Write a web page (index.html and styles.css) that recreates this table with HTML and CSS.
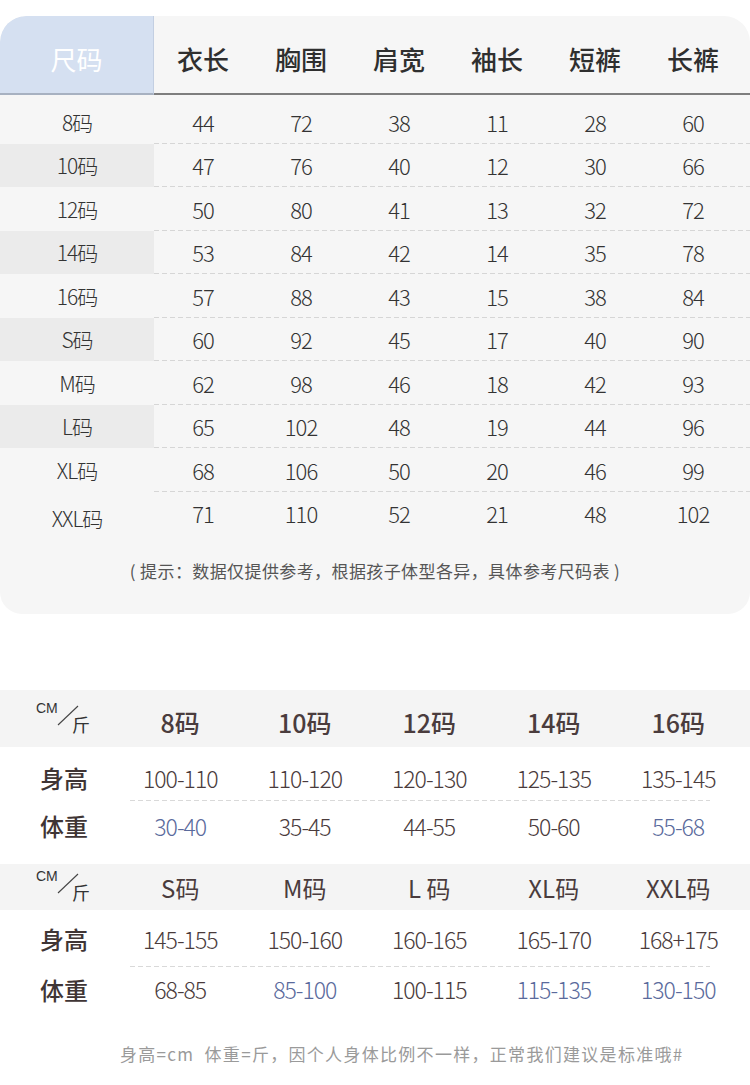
FILE: index.html
```html
<!DOCTYPE html>
<html lang="zh-CN">
<head>
<meta charset="utf-8">
<title>尺码表</title>
<link rel="stylesheet" href="styles.css">
</head>
<body>
<section class="card">
  <div class="thead">
    <div class="th-size">尺码</div>
    <div class="th-cols">
      <div class="th">衣长</div>
      <div class="th">胸围</div>
      <div class="th">肩宽</div>
      <div class="th">袖长</div>
      <div class="th">短裤</div>
      <div class="th">长裤</div>
    </div>
  </div>
  <div class="tbody">
    <div class="row"><div class="label">8码</div><div class="cells"><span>44</span><span>72</span><span>38</span><span>11</span><span>28</span><span>60</span></div></div>
    <div class="row alt"><div class="label">10码</div><div class="cells"><span>47</span><span>76</span><span>40</span><span>12</span><span>30</span><span>66</span></div></div>
    <div class="row"><div class="label">12码</div><div class="cells"><span>50</span><span>80</span><span>41</span><span>13</span><span>32</span><span>72</span></div></div>
    <div class="row alt"><div class="label">14码</div><div class="cells"><span>53</span><span>84</span><span>42</span><span>14</span><span>35</span><span>78</span></div></div>
    <div class="row"><div class="label">16码</div><div class="cells"><span>57</span><span>88</span><span>43</span><span>15</span><span>38</span><span>84</span></div></div>
    <div class="row alt"><div class="label">S码</div><div class="cells"><span>60</span><span>92</span><span>45</span><span>17</span><span>40</span><span>90</span></div></div>
    <div class="row"><div class="label">M码</div><div class="cells"><span>62</span><span>98</span><span>46</span><span>18</span><span>42</span><span>93</span></div></div>
    <div class="row alt"><div class="label">L码</div><div class="cells"><span>65</span><span>102</span><span>48</span><span>19</span><span>44</span><span>96</span></div></div>
    <div class="row"><div class="label">XL码</div><div class="cells"><span>68</span><span>106</span><span>50</span><span>20</span><span>46</span><span>99</span></div></div>
    <div class="row last"><div class="label label-low">XXL码</div><div class="cells"><span>71</span><span>110</span><span>52</span><span>21</span><span>48</span><span>102</span></div></div>
  </div>
  <p class="hint">( 提示：数据仅提供参考，根据孩子体型各异，具体参考尺码表 )</p>
</section>

<section class="hw hw-a">
  <div class="hw-head">
    <div class="unit"><span class="unit-cm">CM</span><svg class="unit-slash" width="24" height="22" viewBox="0 0 24 22"><line x1="22" y1="1" x2="2" y2="20" stroke="#444" stroke-width="1.1"/></svg><span class="unit-jin">斤</span></div>
    <div class="hc">8码</div><div class="hc">10码</div><div class="hc">12码</div><div class="hc">14码</div><div class="hc">16码</div>
  </div>
  <div class="hw-row hw-r1">
    <div class="hl">身高</div>
    <div class="hv">100-110</div><div class="hv">110-120</div><div class="hv">120-130</div><div class="hv">125-135</div><div class="hv">135-145</div>
  </div>
  <div class="hw-row hw-r2">
    <div class="hl">体重</div>
    <div class="hv blue">30-40</div><div class="hv">35-45</div><div class="hv">44-55</div><div class="hv">50-60</div><div class="hv blue">55-68</div>
  </div>
</section>

<section class="hw hw-b">
  <div class="hw-head">
    <div class="unit"><span class="unit-cm">CM</span><svg class="unit-slash" width="24" height="22" viewBox="0 0 24 22"><line x1="22" y1="1" x2="2" y2="20" stroke="#444" stroke-width="1.1"/></svg><span class="unit-jin">斤</span></div>
    <div class="hc">S码</div><div class="hc">M码</div><div class="hc">L 码</div><div class="hc">XL码</div><div class="hc">XXL码</div>
  </div>
  <div class="hw-row hw-r1">
    <div class="hl">身高</div>
    <div class="hv">145-155</div><div class="hv">150-160</div><div class="hv">160-165</div><div class="hv">165-170</div><div class="hv">168+175</div>
  </div>
  <div class="hw-row hw-r2">
    <div class="hl">体重</div>
    <div class="hv">68-85</div><div class="hv blue">85-100</div><div class="hv">100-115</div><div class="hv blue">115-135</div><div class="hv blue">130-150</div>
  </div>
</section>

<p class="foot">身高=cm&nbsp;&nbsp;体重=斤，因个人身体比例不一样，正常我们建议是标准哦#</p>
</body>
</html>
```

FILE: styles.css
```css
* { box-sizing: border-box; }
html, body { margin: 0; padding: 0; background: #fff; }
body {
  width: 750px;
  font-family: "Noto Sans CJK SC", "Noto Sans", sans-serif;
  color: #333;
}

/* ---------- size table ---------- */
.card {
  margin-top: 16px;
  height: 598px;
  background: #f6f6f6;
  border-radius: 26px 26px 22px 22px;
  overflow: hidden;
}
.thead {
  display: flex;
  height: 79px;
}
.th-size {
  width: 154px;
  display: flex;
  align-items: center;
  justify-content: center;
  padding-top: 8px;
  font-size: 26px;
  font-weight: 400;
  background: #d5e0f1;
  color: #fff;
  border-right: 1px solid #c3cfe2;
  border-bottom: 2px solid #a7b1c1;
  border-top-left-radius: 26px;
}
.th-cols {
  flex: 1;
  display: grid;
  grid-template-columns: repeat(6, 1fr);
  padding-right: 8px;
  border-bottom: 2px solid #7e7e7e;
}
.th {
  display: flex;
  align-items: center;
  justify-content: center;
  font-size: 26px;
  font-weight: 500;
  color: #2f2f2f;
  padding-top: 8px;
}

.tbody { padding-top: 5px; }
.row {
  display: flex;
  height: 43.5px;
}
.label {
  width: 154px;
  display: flex;
  align-items: center;
  justify-content: center;
  font-size: 21px;
  font-weight: 300;
  color: #333;
  letter-spacing: -1px;
}
.row.alt .label { background: #ebebeb; }
.label-low { padding-top: 10px; }
.cells {
  flex: 1;
  display: grid;
  grid-template-columns: repeat(6, 1fr);
  padding-right: 8px;
  align-items: center;
  background: linear-gradient(to right, #d6d6d6 60%, transparent 0) left bottom / 8px 1px repeat-x;
}
.row.last .cells { background: none; }
.cells span {
  text-align: center;
  font-size: 22px;
  font-weight: 300;
  color: #333;
  letter-spacing: -1px;
}
.hint {
  margin: 23px 0 0;
  text-align: center;
  font-size: 17px;
  letter-spacing: 0.4px;
  color: #555;
}

/* ---------- height / weight tables ---------- */
.hw { margin-top: 76px; }
.hw-b { margin-top: 11px; }
.hw-head, .hw-row {
  display: grid;
  grid-template-columns: 118px repeat(5, 124.5px);
  align-items: center;
}
.hw-head { background: #f4f4f4; }
.hw-a .hw-head { height: 57px; padding-top: 6px; }
.hw-b .hw-head { height: 46px; }
.hc {
  text-align: center;
  font-size: 25px;
  color: #4a3c3d;
}
.hw-a .hc { font-weight: 500; }
.hw-b .hc { font-size: 24px; font-weight: 400; }

.unit {
  position: relative;
  width: 60px;
  height: 36px;
  margin-left: 34px;
  color: #333;
}
.hw-a .unit { margin-top: -6px; }
.unit-cm {
  position: absolute;
  left: 2px;
  top: 0;
  font-family: "Liberation Sans", sans-serif;
  font-size: 14px;
  line-height: 14px;
}
.unit-slash { position: absolute; left: 22px; top: 4px; }
.unit-jin {
  position: absolute;
  left: 38px;
  top: 12px;
  font-size: 18px;
  line-height: 22px;
}

.hl {
  text-align: center;
  padding-left: 10px;
  font-size: 24px;
  font-weight: 500;
  color: #3f3535;
}
.hv {
  text-align: center;
  font-size: 23px;
  font-weight: 300;
  color: #4a3b3c;
  letter-spacing: -1px;
}
.hv.blue { color: #5a6a9c; }
.hw-row { position: relative; }
.hw-a .hw-r1 { height: 54px; padding-top: 7px; }
.hw-a .hw-r2 { height: 52px; padding-bottom: 3px; }
.hw-b .hw-r1 { height: 57px; padding-top: 0; }
.hw-b .hw-r2 { height: 48px; padding-bottom: 4px; }
.hw-r1::after {
  content: "";
  position: absolute;
  left: 130px;
  width: 580px;
  bottom: 0;
  height: 1px;
  background: linear-gradient(to right, #d9d9d9 60%, transparent 0) left top / 8px 1px repeat-x;
}
.foot {
  margin: 26px 0 0;
  padding-left: 120px;
  font-size: 17px;
  letter-spacing: 1.3px;
  color: #9a9a9a;
}
```
